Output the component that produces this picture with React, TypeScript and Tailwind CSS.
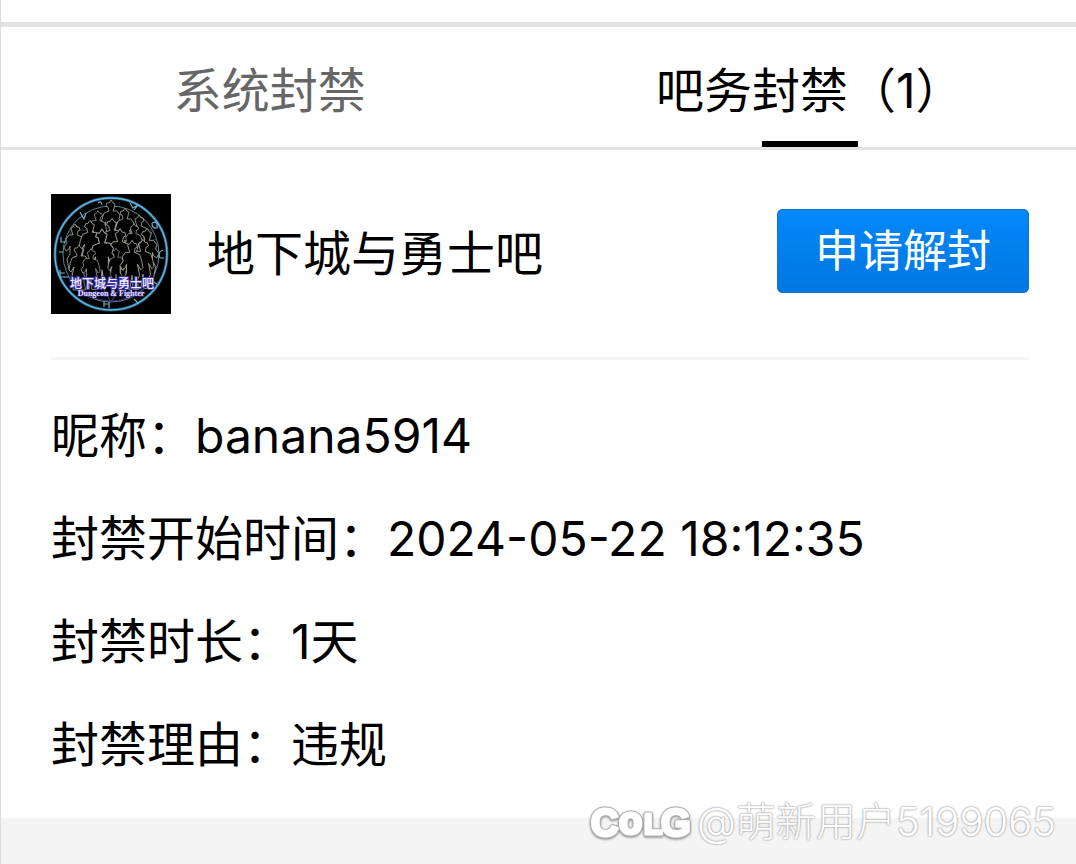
import React, { useState } from 'react'

const tabs = [
  { id: 'system', label: '系统封禁' },
  { id: 'forum', label: '吧务封禁（1）' },
]

const details = [
  { label: '昵称', value: 'banana5914' },
  { label: '封禁开始时间', value: '2024-05-22 18:12:35' },
  { label: '封禁时长', value: '1天' },
  { label: '封禁理由', value: '违规' },
]

// x, y of the head and overall scale, back row first
const figures = [
  [60, 13, 11], [47, 23, 10], [74, 21, 11], [88, 28, 11], [61, 32, 12],
  [24, 37, 11], [39, 34, 12], [83, 36, 10], [96, 42, 12], [69, 43, 13],
  [51, 44, 14], [92, 53, 12], [28, 58, 11], [40, 61, 10], [65, 60, 9],
  [81, 54, 12],
]

const Avatar = () => {
  return (
    <svg
      className="size-[120px] shrink-0 bg-black"
      viewBox="0 0 120 120"
      role="img"
      aria-label="地下城与勇士吧"
    >
      <rect width="120" height="120" fill="#000" />
      <circle cx="60" cy="60" r="56" fill="none" stroke="#1d5578" strokeWidth="3" />
      <circle cx="60" cy="60" r="56" fill="none" stroke="#6bb5d8" strokeWidth="1.4" />
      <circle cx="60" cy="60" r="48" fill="none" stroke="#708e9c" strokeWidth="0.9" />
      <path
        d="M60 12L102 84H18ZM60 108L18 36H102ZM14 45L106 75M14 75L106 45"
        fill="none"
        stroke="#34505f"
        strokeWidth="0.8"
      />
      <path
        d="M29 18L33 25L35 19M47 9Q50 6 51 11M79 9L82 14L87 11L83 16M101 29Q107 26 106 34Q101 35 101 29M10 43V48H15M9 76V83H18M9 79H14M8 58H12M112 56Q106 58 109 64H113M53 107V113M58 108V114M53 110H58M101 87L106 90M20 91L25 87M83 105L87 109"
        fill="none"
        stroke="#6fb2cf"
        strokeWidth="1.2"
      />
      {figures.map(([x, y, s], i) => (
        <g key={i} transform={`translate(${x} ${y}) scale(${i % 2 ? -s / 11 : s / 11} ${s / 11})`}>
          <path
            d="M-3 0L-5 -1L-4 -4L-2 -4L0 -7L2 -4L4 -3L3 1L2 4L6 4L9 8L8 12L11 16L9 20L6 18L5 15L5 23L8 28L6 38L2 38L0 25L-1 38L-6 38L-5 29L-7 25L-5 15L-8 20L-10 18L-9 12L-7 6L-2 4Z"
            fill="#020202"
            stroke="#aaa79a"
            strokeWidth="0.8"
            strokeLinejoin="round"
          />
        </g>
      ))}
      <path d="M52 95L60 108L69 95M30 96Q60 118 90 96" fill="none" stroke="#3d3c86" strokeWidth="0.8" />
      <text
        x="61"
        y="94"
        textAnchor="middle"
        fill="#f1efff"
        stroke="#4239a8"
        strokeWidth="2"
        paintOrder="stroke"
        fontSize="12"
        fontWeight="500"
        fontFamily="'Noto Sans CJK SC', sans-serif"
      >
        地下城与勇士吧
      </text>
      <text
        x="60"
        y="102"
        textAnchor="middle"
        fill="#e3dfff"
        stroke="#4239a8"
        strokeWidth="1"
        paintOrder="stroke"
        fontSize="8"
        fontWeight="700"
        fontFamily="'Liberation Serif', serif"
      >
        Dungeon &amp; Fighter
      </text>
    </svg>
  )
}

const LogoLetters = () => {
  return (
    <>
      <text x="3" y="36" fontSize="38">C</text>
      <text x="31" y="34" fontSize="38">o</text>
      <text x="56" y="34" fontSize="30">L</text>
      <text x="73" y="36" fontSize="38">G</text>
    </>
  )
}

const ColgLogo = () => {
  return (
    <svg
      className="h-[44px] w-[109px] shrink-0 drop-shadow-[0_1px_1px_rgba(0,0,0,0.45)]"
      viewBox="0 0 109 44"
      role="img"
      aria-label="COLG"
    >
      <g
        fill="#fff"
        strokeLinejoin="round"
        fontFamily="'Liberation Sans', sans-serif"
        fontWeight="700"
      >
        <g stroke="#b0b0b0" strokeWidth="5">
          <LogoLetters />
        </g>
        <g stroke="#fff" strokeWidth="3">
          <LogoLetters />
        </g>
      </g>
    </svg>
  )
}

const App = () => {
  const [active, setActive] = useState('forum')

  return (
    <div className="relative min-h-screen border-l border-[#dcdcdc] bg-[#f4f4f4] font-[Inter,'Noto_Sans_CJK_SC',sans-serif] text-[48px] text-black">
      <main className="bg-white pt-[22px]">
        <div className="h-[5px] bg-[#e3e3e3]" />
        <nav className="grid h-[123px] grid-cols-2 border-b-[3px] border-[#e3e3e3]">
          {tabs.map((tab) => (
            <button
              key={tab.id}
              type="button"
              onClick={() => setActive(tab.id)}
              className={
                active === tab.id
                  ? 'flex flex-col items-center justify-between pt-7 pl-[5px] leading-[72px] whitespace-nowrap text-black'
                  : 'flex flex-col items-center justify-between pt-7 leading-[72px] whitespace-nowrap text-[#666]'
              }
            >
              {tab.label}
              {active === tab.id && <span className="h-[6px] w-24 bg-black" />}
            </button>
          ))}
        </nav>

        <section className="pr-[47px] pb-[22px] pl-[50px]">
          <div className="flex items-start border-b-[3px] border-[#f4f4f4] pt-[44px] pb-[43px]">
            <Avatar />
            <h1 className="ml-9 flex-1 leading-[120px]">地下城与勇士吧</h1>
            <button
              type="button"
              className="mt-[15px] h-[84px] w-[252px] rounded-[5px] border border-[#1273c4] bg-linear-to-b from-[#0488f8] to-[#0077e2] text-[44px] leading-[80px] text-white"
            >
              申请解封
            </button>
          </div>
          <dl className="pt-6">
            {details.map((item) => (
              <div key={item.label} className="flex leading-[103px]">
                <dt>{item.label}：</dt>
                <dd>{item.value}</dd>
              </div>
            ))}
          </dl>
        </section>
      </main>

      <div className="absolute right-5 bottom-4 flex items-center text-[40px] leading-[52px] font-light text-white">
        <ColgLogo />
        <span className="[text-shadow:0_0_2px_#aaa,0_0_2px_#aaa,0_0_1px_#bbb]">
          @萌新用户5199065
        </span>
      </div>
    </div>
  )
}

export default App
